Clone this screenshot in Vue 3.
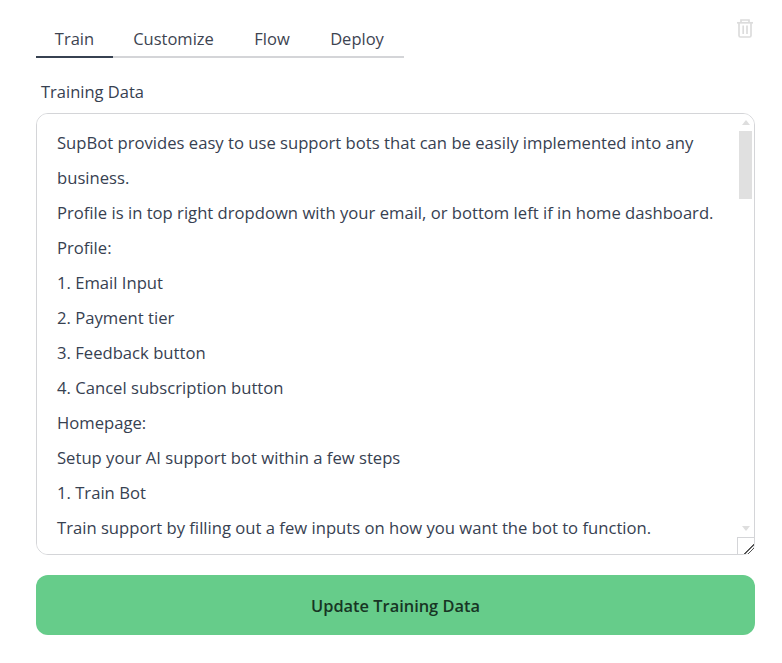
<template>
  <div class="page">
    <div class="top-row">
      <div class="tabs">
        <a
          v-for="tab in tabs"
          :key="tab"
          class="tab"
          :class="{ active: tab === activeTab }"
          href="#"
          @click.prevent="activeTab = tab"
        >{{ tab }}</a>
      </div>
      <button class="delete-btn" type="button" aria-label="Delete">
        <svg width="16" height="19" viewBox="0 0 16 19" fill="none" stroke="currentColor" stroke-width="1.7">
          <path d="M0 3.8h16" />
          <path d="M4 3.5V1h8v2.5" />
          <path d="M2 4v12.6c0 .8.6 1.4 1.4 1.4h9.2c.8 0 1.4-.6 1.4-1.4V4" />
          <path d="M6.2 6.5v8.5M10 6.5v8.5" />
        </svg>
      </button>
    </div>

    <label class="field-label" for="training">Training Data</label>
    <div class="input-wrap">
      <textarea id="training" v-model="trainingData" class="training-input" spellcheck="false"></textarea>
      <!-- scrollbar is hidden by the browser here, so it is drawn over the textarea -->
      <div class="scrollbar" aria-hidden="true">
        <span class="arrow up"></span>
        <span class="thumb"></span>
        <span class="arrow down"></span>
      </div>
      <div class="resize-corner" aria-hidden="true"></div>
    </div>

    <button class="update-btn" type="button">Update Training Data</button>
  </div>
</template>

<script setup>
import { ref } from 'vue'

const tabs = ['Train', 'Customize', 'Flow', 'Deploy']
const activeTab = ref('Train')

const lines = [
  'SupBot provides easy to use support bots that can be easily implemented into any business.',
  'Profile is in top right dropdown with your email, or bottom left if in home dashboard.',
  'Profile:',
  '1. Email Input',
  '2. Payment tier',
  '3. Feedback button',
  '4. Cancel subscription button',
  'Homepage:',
  'Setup your AI support bot within a few steps',
  '1. Train Bot',
  'Train support by filling out a few inputs on how you want the bot to function.',
  '2. Customize',
  'Change the colors, logo and welcome message of your bot.',
  '3. Deploy',
  'Copy the embed code and paste it into your website.',
]

const trainingData = ref(lines.join('\n'))
</script>

<style scoped>
.page {
  box-sizing: border-box;
  width: 782px;
  height: 663px;
  padding: 20px 27px 0 36px;
  display: flex;
  flex-direction: column;
  background: #fff;
  font-family: "Open Sans", "Noto Sans", sans-serif;
  color: #374151;
}
.top-row {
  display: flex;
  justify-content: space-between;
  align-items: flex-start;
}
.tabs {
  display: grid;
  grid-template-columns: 77px 121px 76px 94px;
}
.tab {
  height: 36px;
  border-bottom: 2px solid #d4d5d8;
  font-size: 16.5px;
  line-height: 38px;
  text-align: center;
  color: #3d4451;
  text-decoration: none;
}
.tab.active {
  border-bottom-color: #374151;
}
.delete-btn {
  display: flex;
  padding: 0;
  margin: -1px 2px 0 0;
  border: none;
  background: none;
  color: #dcdcdc;
  cursor: pointer;
}
.field-label {
  margin: 22px 0 9px 5px;
  font-size: 16.5px;
  line-height: 24px;
}
.input-wrap {
  position: relative;
  display: flex;
  width: 719px;
}
.training-input {
  box-sizing: border-box;
  width: 100%;
  height: 442px;
  padding: 11px 37px 11px 20px;
  border: 1px solid #d4d5d8;
  border-radius: 12px;
  outline: none;
  font-family: inherit;
  font-size: 16.65px;
  line-height: 35px;
  color: #374151;
  resize: none;
  overflow-y: scroll;
  scrollbar-width: none;
}
.scrollbar {
  position: absolute;
  top: 1px;
  right: 1px;
  width: 17px;
  height: 423px;
  display: flex;
  flex-direction: column;
  align-items: center;
  pointer-events: none;
}
.arrow {
  width: 0;
  height: 0;
  flex: none;
  border-left: 4.5px solid transparent;
  border-right: 4.5px solid transparent;
}
.arrow.up {
  margin: 6px 0;
  border-bottom: 5px solid #dedede;
}
.arrow.down {
  margin: auto 0 6px;
  border-top: 5px solid #dedede;
}
.thumb {
  width: 13px;
  height: 68px;
  background: #e0e0e0;
}
.resize-corner {
  position: absolute;
  right: 1px;
  bottom: 1px;
  box-sizing: border-box;
  width: 17px;
  height: 17px;
  border-top: 1px solid #d4d5d8;
  border-left: 1px solid #d4d5d8;
  background: linear-gradient(135deg, transparent 0 68%, #555 68% 72%, transparent 72% 80%, #555 80% 84%, transparent 84%);
  pointer-events: none;
}
.update-btn {
  width: 719px;
  height: 60px;
  margin-top: 20px;
  border: none;
  border-radius: 12px;
  background: #66cc8a;
  font-family: inherit;
  font-size: 16.4px;
  font-weight: 600;
  color: #173524;
  cursor: pointer;
}
</style>
